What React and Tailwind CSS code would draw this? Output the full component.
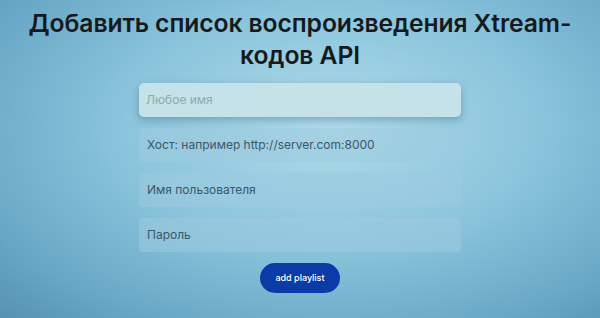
import React from 'react';

const fields = [
    { placeholder: 'Любое имя', focused: true },
    { placeholder: 'Хост: например http://server.com:8000' },
    { placeholder: 'Имя пользователя' },
    { placeholder: 'Пароль' },
];

export default function App() {
    return (
        <div
            className="w-[600px] h-[318px] overflow-hidden flex flex-col items-center bg-[radial-gradient(ellipse_at_55%_40%,#b0dbe9_0%,#8ac4dc_45%,#68a7c6_80%,#5692b3_100%)]"
            style={{ fontFamily: 'Inter, "Noto Sans", sans-serif' }}
        >
            {/* Title */}
            <h1 className="mt-[7px] text-center text-[24.7px] leading-[32px] font-semibold text-[#161a1c] tracking-[-0.1px]">
                Добавить список воспроизведения Xtream-
                <br />
                кодов API
            </h1>

            {/* Form */}
            <div className="mt-[12px] w-[322px] flex flex-col gap-[11px]">
                {fields.map(field => (
                    <div
                        key={field.placeholder}
                        className={
                            field.focused
                                ? 'h-[34px] rounded-[5px] flex items-center px-[7px] bg-[#c4e2e8] shadow-[0_3px_8px_rgba(40,80,100,0.35)]'
                                : 'h-[34px] rounded-[4px] flex items-center px-[8px] bg-[#9ccbe0]/55'
                        }
                    >
                        <span
                            className={
                                field.focused
                                    ? 'text-[12px] text-[#90aab0]'
                                    : 'text-[12px] text-[#3c5868]'
                            }
                        >
                            {field.placeholder}
                        </span>
                    </div>
                ))}
            </div>

            {/* Button */}
            <button className="mt-[11px] w-[80px] h-[30px] rounded-full bg-[#0b3ba6] text-white text-[9px] font-medium">
                add playlist
            </button>
        </div>
    );
}
